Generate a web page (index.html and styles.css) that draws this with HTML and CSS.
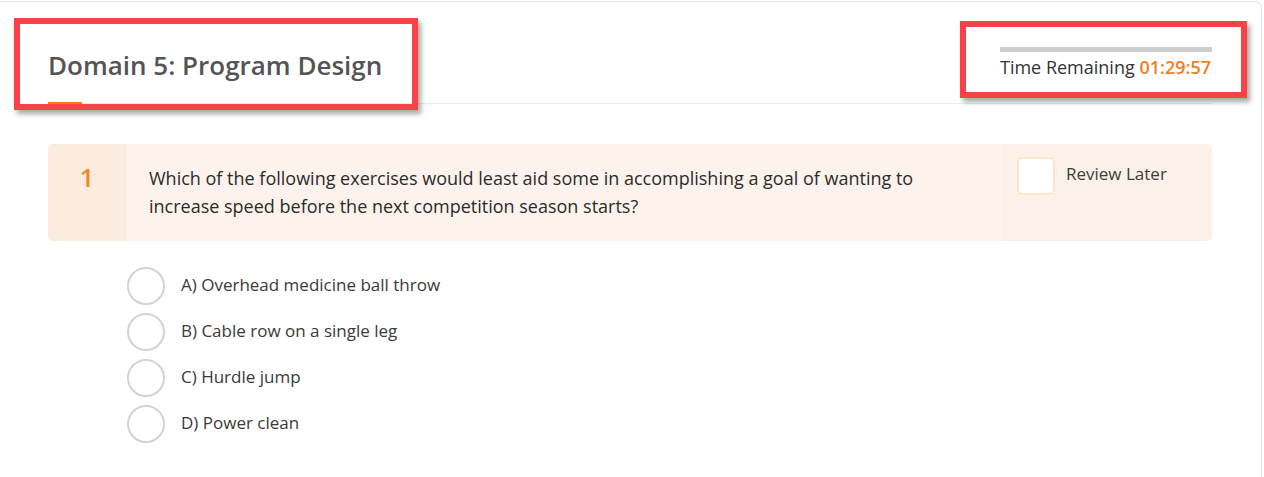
FILE: index.html
```html
<!DOCTYPE html>
<html>
<head>
<meta charset="utf-8">
<link rel="stylesheet" href="styles.css">
</head>
<body>
<div class="card">
  <div class="header">
    <div class="title-wrap">
      <h1 class="title">Domain 5: Program Design</h1>
    </div>
    <div class="timer">
      <div class="timer-bar"></div>
      <div class="timer-text">Time Remaining <span class="timer-value">01:29:57</span></div>
    </div>
  </div>
  <div class="question">
    <div class="q-num">1</div>
    <div class="q-text">Which of the following exercises would least aid some in accomplishing a goal of wanting to increase speed before the next competition season starts?</div>
    <div class="q-review">
      <span class="checkbox"></span>
      <span class="review-label">Review Later</span>
    </div>
  </div>
  <ul class="options">
    <li class="option"><span class="radio"></span><span class="opt-label">A) Overhead medicine ball throw</span></li>
    <li class="option"><span class="radio"></span><span class="opt-label">B) Cable row on a single leg</span></li>
    <li class="option"><span class="radio"></span><span class="opt-label">C) Hurdle jump</span></li>
    <li class="option"><span class="radio"></span><span class="opt-label">D) Power clean</span></li>
  </ul>
</div>
<div class="annot annot-left"></div>
<div class="annot annot-right"></div>
</body>
</html>
```
FILE: styles.css
```css
html, body {
  margin: 0;
  padding: 0;
  background: #fff;
  overflow: hidden;
}
body {
  font-family: "Open Sans", "Liberation Sans", sans-serif;
  color: #333;
  width: 1264px;
  height: 477px;
  position: relative;
}
.card {
  margin: 1px 2px 0 -10px;
  border: 1px solid #e4e4e4;
  border-bottom: none;
  border-radius: 7px 7px 0 0;
  padding: 0 49px 0 57px;
  height: 476px;
  box-sizing: border-box;
}
.header {
  display: flex;
  justify-content: space-between;
  border-bottom: 1px solid #ececec;
  height: 101px;
}
.title-wrap {
  position: relative;
  padding-top: 45px;
}
.title-wrap::after {
  content: "";
  position: absolute;
  left: 0;
  bottom: -2px;
  width: 34px;
  height: 3px;
  background: #ee7d1d;
}
.title {
  margin: 0;
  font-size: 26px;
  line-height: 36px;
  font-weight: 600;
  color: #545454;
}
.timer {
  padding-top: 45px;
  width: 212px;
}
.timer-bar {
  height: 5px;
  background: #cccccc;
}
.timer-text {
  font-size: 18px;
  line-height: 24px;
  margin-top: 3px;
  color: #333;
  white-space: nowrap;
}
.timer-value {
  color: #ee7f22;
  font-weight: 600;
}
.question {
  display: flex;
  margin-top: 40px;
  background: #fdf3ec;
  border-radius: 5px;
  overflow: hidden;
  min-height: 97px;
}
.q-num {
  width: 78px;
  flex: none;
  background: #fcece0;
  color: #f08a24;
  font-size: 26px;
  font-weight: 600;
  line-height: 28px;
  text-align: center;
  padding-top: 19px;
}
.q-text {
  flex: 1;
  padding: 20px 60px 20px 23px;
  font-size: 18px;
  line-height: 28px;
  color: #2b2b2b;
}
.q-review {
  width: 210px;
  flex: none;
  background: #fcf1e9;
  display: flex;
  align-items: flex-start;
  padding: 13px 0 0 15px;
  box-sizing: border-box;
}
.checkbox {
  width: 38px;
  height: 38px;
  box-sizing: border-box;
  border: 2px solid #fde5cc;
  border-radius: 5px;
  background: #fff;
  flex: none;
}
.review-label {
  margin-left: 11px;
  font-size: 17px;
  line-height: 24px;
  padding-top: 5px;
  color: #3c3c3c;
}
.options {
  list-style: none;
  margin: 26px 0 0 79px;
  padding: 0;
  display: flex;
  flex-direction: column;
  gap: 8px;
}
.option {
  display: flex;
  align-items: center;
  height: 38px;
}
.radio {
  width: 38px;
  height: 38px;
  box-sizing: border-box;
  border: 2px solid #d3d3d3;
  border-radius: 50%;
  flex: none;
}
.opt-label {
  margin-left: 16px;
  font-size: 17px;
  line-height: 24px;
  margin-top: -2px;
  color: #3a3a3a;
}
.annot {
  position: absolute;
  border: 6px solid #fa4245;
  box-shadow: 3px 4px 5px rgba(0, 0, 0, 0.35);
  box-sizing: border-box;
}
.annot-left {
  left: 14px;
  top: 18px;
  width: 404px;
  height: 92px;
}
.annot-right {
  left: 960px;
  top: 21px;
  width: 287px;
  height: 77px;
}
```
